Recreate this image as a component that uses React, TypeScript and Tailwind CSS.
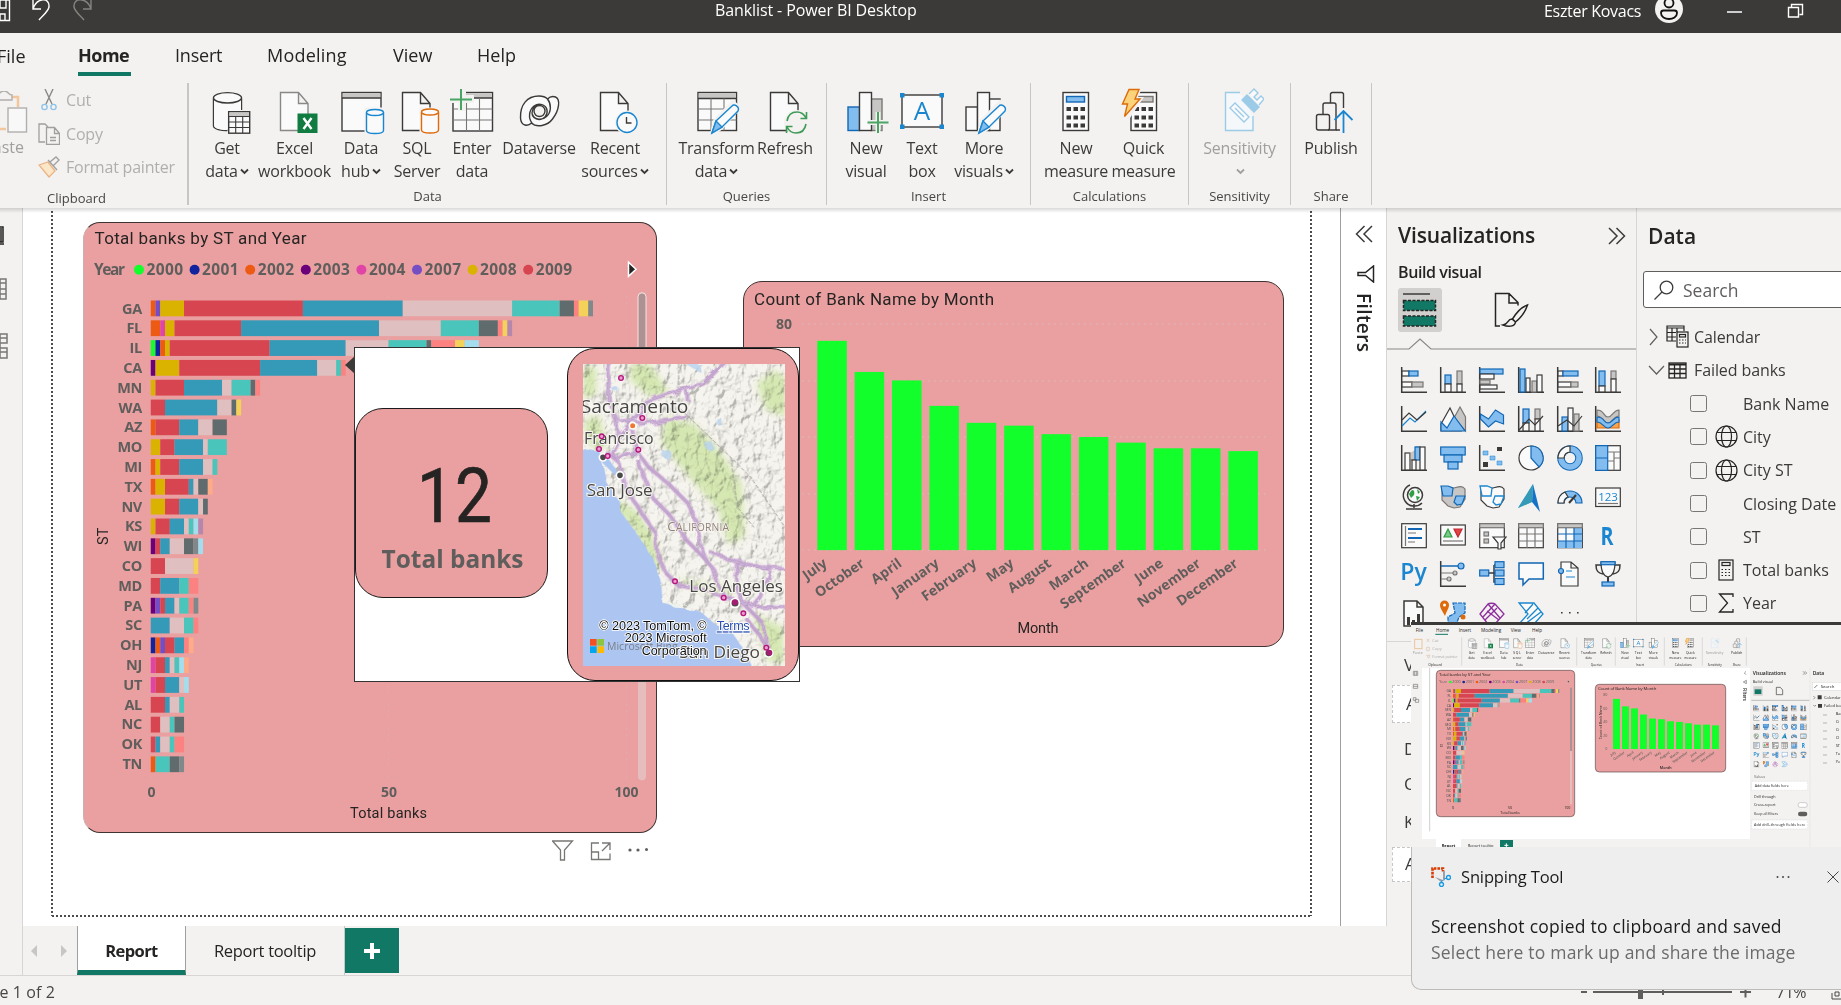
import React from "react";

const DARK = "#3b3a39";
const BLUE = "#1a86d0";
const LBLUE = "#83bdef";
const MBLUE = "#1267b4";
const GRAY = "#c8c6c4";
const MGRAY = "#797775";
const WHITE = "#fafafa";

/* ---------- ribbon icons (48 x 48) ---------- */

const Big = ({ children }: { children: React.ReactNode }) => (
  <svg width="48" height="48" viewBox="0 0 48 48" fill="none" stroke={DARK} strokeWidth="1.4" className="shrink-0">
    {children}
  </svg>
);

const Page = ({ color = DARK }: { color?: string }) => (
  <path d="M9.5 4.5h18l9.5 11v27h-27.5zM27.5 4.5v11h9.500" fill={WHITE} stroke={color} />
);

const Cyl = ({ x, y, w, h, color }: { x: number; y: number; w: number; h: number; color: string }) => (
  <g stroke={color} fill={WHITE}>
    <path d={`M${x} ${y + 3}v${h - 6}c0 4 ${w} 4 ${w} 0v-${h - 6}`} />
    <ellipse cx={x + w / 2} cy={y + 3} rx={w / 2} ry="3" />
  </g>
);

const Pencil = () => (
  <g>
    <path d="M22 33L40 14l6 6-18 20-9 6z" fill="#f3f2f1" stroke="#f3f2f1" strokeWidth="4" />
    <path d="M23 33L39 18c2-3 8 1 6 5L29 39l-10 6z" fill={WHITE} stroke={BLUE} />
    <path d="M23 33l6 6-10 6z" fill={LBLUE} stroke={BLUE} />
  </g>
);

const Calc = () => (
  <g>
    <rect x="11" y="4.500" width="25.500" height="38" fill={WHITE} />
    {[19, 27.5, 35.5].map((y) =>
      [14.5, 21.5, 28.5].map((x) => <rect key={`${x}-${y}`} x={x} y={y} width="4.500" height="4" fill={DARK} stroke="none" />)
    )}
  </g>
);

const IconGet = (
  <Big>
    <path d="M10.500 10v28c0 3 8 4.800 14 4.500M38.500 10v12" />
    <path d="M11 10h27v13h-14v19c-8 0-13-2-13-5z" fill={WHITE} stroke="none" />
    <ellipse cx="24.500" cy="9.800" rx="14" ry="5.200" fill={WHITE} />
    <rect x="25.700" y="23.700" width="21" height="21.500" fill={WHITE} />
    <rect x="26.400" y="24.400" width="19.600" height="3.600" fill={GRAY} stroke="none" />
    <path d="M25.700 28.500h21M25.700 34h21M25.700 39.500h21M32.700 28v17M39.700 28v17" strokeWidth="1.100" />
  </Big>
);
const IconExcel = (
  <Big>
    <Page color="#8a8886" />
    <rect x="26.500" y="25.500" width="20" height="19.500" fill="#107c41" stroke="none" />
    <path d="M32.500 30l8 11M40.500 30l-8 11" stroke="#fff" strokeWidth="2.400" />
  </Big>
);
const IconHub = (
  <Big>
    <rect x="5" y="4.500" width="39" height="38.500" fill={WHITE} />
    <rect x="5.700" y="5.200" width="37.600" height="4.600" fill={GRAY} stroke="none" />
    <path d="M5 10h39" />
    <rect x="27.500" y="19.500" width="21" height="28" fill="#f3f2f1" stroke="none" />
    <Cyl x={29.500} y={21.500} w={17} h={24} color={BLUE} />
  </Big>
);
const IconSql = (
  <Big>
    <Page />
    <rect x="26.500" y="19.500" width="21" height="28" fill="#f3f2f1" stroke="none" />
    <Cyl x={28.500} y={21} w={17} h={24} color="#dd6b0a" />
  </Big>
);
const IconEnter = (
  <Big>
    <rect x="5" y="4.500" width="39.500" height="38.500" fill={WHITE} />
    <rect x="5.700" y="5.200" width="38" height="4.600" fill={GRAY} stroke="none" />
    <path d="M5 10h39.500" />
    <path d="M5 21h39.500M5 32h39.500M18.500 10v33M31.500 10v33" stroke={MGRAY} strokeWidth="1.100" />
    <path d="M1 1h17v6h8v8h-8v8h-8v-8h-9z" fill="#f3f2f1" stroke="none" />
    <path d="M13 1v21M2 11.500h22" stroke="#4aa564" strokeWidth="2" />
  </Big>
);
const IconDataverse = (
  <Big>
    <path d="M24 8c-12 0-19 9-18.500 22 .5 9 8 8 11 5 5 5 16 3 21-4 7-9 8-20 3-22-3-1-6 0-8 2-2-2-5-3-8.500-3z" fill={WHITE} />
    <path d="M17 35c-4-5-3-13 2-17 5-3.500 12-1.500 13 4 1 5-3 9.500-8 9.500-4 0-7-3-7-6.500 0-5 4-8.500 8-8M32.500 11c4 5 4 13-1 17.500-4 4-12 4-14-2" />
    <circle cx="24.500" cy="23" r="5.500" fill="#f3f2f1" />
  </Big>
);
const IconRecent = (
  <Big>
    <Page />
    <circle cx="36" cy="34.500" r="12" fill="#f3f2f1" stroke="none" />
    <circle cx="36" cy="34.500" r="10" fill={WHITE} stroke={BLUE} />
    <path d="M35.500 29v6h5" />
  </Big>
);
const IconTransform = (
  <Big>
    <rect x="5" y="4.500" width="38.500" height="38" fill={WHITE} />
    <rect x="5.700" y="5.200" width="37" height="5" fill={GRAY} stroke="none" />
    <path d="M5 10.500h38.500" />
    <path d="M5 21h38.500M5 32h38.500M18 10.500v32M31 10.500v32" stroke={MGRAY} strokeWidth="1.100" />
    <Pencil />
  </Big>
);
const IconRefresh = (
  <Big>
    <Page />
    <circle cx="35.500" cy="34.500" r="12.500" fill="#f3f2f1" stroke="none" />
    <path d="M26 33c1-6 5-9 10-9 4 0 7 2 9 6M45 36c-1 6-5 9-10 9-4 0-7-2-9-6M45.500 24v6.500h-6M25.500 45v-6.500h6" stroke="#3f9a56" strokeWidth="1.600" />
  </Big>
);
const IconNewVisual = (
  <Big>
    <rect x="6" y="19" width="11.500" height="23.500" fill={LBLUE} stroke={MBLUE} />
    <rect x="29" y="11" width="11" height="31.500" fill={GRAY} stroke={MGRAY} />
    <rect x="17.500" y="4.500" width="12" height="38" fill={WHITE} />
    <path d="M36 24v21M25.500 34.500h21" stroke="#f3f2f1" strokeWidth="5" />
    <path d="M36 24v21M25.500 34.500h21" stroke="#4aa564" strokeWidth="2" />
  </Big>
);
const IconText = (
  <Big>
    <rect x="4" y="7" width="40" height="32" fill={WHITE} />
    <text x="24" y="32" textAnchor="middle" fontFamily="Open Sans" fontSize="26" fill={BLUE} stroke="none">A</text>
    {[[2, 5], [41.500, 5], [2, 36.500], [41.500, 36.500]].map(([x, y]) => (
      <rect key={`${x}${y}`} x={x} y={y} width="4.500" height="4.500" fill={BLUE} stroke="none" />
    ))}
  </Big>
);
const IconMore = (
  <Big>
    <rect x="29" y="11" width="11" height="31.500" fill={WHITE} />
    <rect x="6" y="19" width="11.500" height="23.500" fill={WHITE} />
    <rect x="17.500" y="4.500" width="12" height="38" fill={WHITE} />
    <Pencil />
  </Big>
);
const IconMeasure = (
  <Big>
    <Calc />
    <rect x="14.500" y="8.500" width="18" height="5.500" fill={LBLUE} stroke={MBLUE} />
  </Big>
);
const IconQuick = (
  <Big>
    <Calc />
    <rect x="16" y="8.500" width="17" height="5.500" fill={GRAY} stroke={MGRAY} />
    <path d="M7 0h15l-4 9h6l-16 24-7-4 2-10h-4z" fill="#f3f2f1" stroke="none" />
    <path d="M9 1.500h10l-4 9.500h5L4.500 28.500 7.500 16h-5z" fill="#fcd37a" stroke="#dd6b0a" />
  </Big>
);
const IconSensitivity = (
  <Big>
    <g stroke="#9ccbe8">
      <path d="M24 4.500H9.500v38H37V28" fill="#f4f8fa" />
      <path d="M26 12l5-5 12 12-5 5z" fill="#9ccbe8" />
      <path d="M33 6l5-5 4 4-4 4 3 3 4-4 3 3-5 6" fill={WHITE} />
      <path d="M14 20l5-5 14 14-5 5zM19 20l9 9" fill={WHITE} />
    </g>
  </Big>
);
const IconPublish = (
  <Big>
    <rect x="9.500" y="26.500" width="13" height="15.500" rx="2" />
    <path d="M16 26v-9a2 2 0 012-2h9a2 2 0 012 2v25h-8" />
    <path d="M23.500 15v-8a2 2 0 012-2.500h9a2 2 0 012 2.500v13M29 42h4" />
    <path d="M36.500 45V24M27.500 32l9-9 9 9" stroke={BLUE} strokeWidth="1.800" />
  </Big>
);

const Chev = ({ faded = false }: { faded?: boolean }) => (
  <svg width="9" height="7" viewBox="0 0 9 7" fill="none" stroke={faded ? "#a19f9d" : DARK} strokeWidth="1.800" className="inline-block ml-0.5 mb-px">
    <path d="M1 1.500l3.500 3.500L8 1.500" />
  </svg>
);

type Btn = { icon: React.ReactNode; lines: string[]; w: string; arrow?: boolean; faded?: boolean };
type Group = { name: string; w: string; items: Btn[] };

const groups: Group[] = [
  {
    name: "Data",
    w: "w-[478px]",
    items: [
      { icon: IconGet, lines: ["Get", "data"], w: "w-[76px]", arrow: true },
      { icon: IconExcel, lines: ["Excel", "workbook"], w: "w-[59px]" },
      { icon: IconHub, lines: ["Data", "hub"], w: "w-[74px]", arrow: true },
      { icon: IconSql, lines: ["SQL", "Server"], w: "w-[38px]" },
      { icon: IconEnter, lines: ["Enter", "data"], w: "w-[72px]" },
      { icon: IconDataverse, lines: ["Dataverse"], w: "w-[62px]" },
      { icon: IconRecent, lines: ["Recent", "sources"], w: "w-[90px]", arrow: true },
    ],
  },
  {
    name: "Queries",
    w: "w-[160px]",
    items: [
      { icon: IconTransform, lines: ["Transform", "data"], w: "w-[99px]", arrow: true },
      { icon: IconRefresh, lines: ["Refresh"], w: "w-[38px]" },
    ],
  },
  {
    name: "Insert",
    w: "w-[204px]",
    items: [
      { icon: IconNewVisual, lines: ["New", "visual"], w: "w-[78px]" },
      { icon: IconText, lines: ["Text", "box"], w: "w-[34px]" },
      { icon: IconMore, lines: ["More", "visuals"], w: "w-[90px]", arrow: true },
    ],
  },
  {
    name: "Calculations",
    w: "w-[158px]",
    items: [
      { icon: IconMeasure, lines: ["New", "measure"], w: "w-[90px]" },
      { icon: IconQuick, lines: ["Quick", "measure"], w: "w-[45px]" },
    ],
  },
  { name: "Sensitivity", w: "w-[102px]", items: [{ icon: IconSensitivity, lines: ["Sensitivity", ""], w: "w-[101px]", arrow: true, faded: true }] },
  { name: "Share", w: "w-[81px]", items: [{ icon: IconPublish, lines: ["Publish"], w: "w-[80px]" }] },
];

function Ribbon() {
  return (
    <div className="flex h-[126px] pt-[1px]">
      <div className="w-[189px] h-[122px] border-r-2 border-[#c8c6c4] relative shrink-0">
        <div className="flex h-full text-[16px] text-[#b1afad]">
          <div className="w-[31px] overflow-hidden flex flex-col items-end shrink-0">
            <svg width="31" height="46" viewBox="0 0 31 46" fill="none" stroke="#b1afad" strokeWidth="1.400" className="mt-2">
              <path d="M-10 38V6h10M10 6h8v10M0 38h6" stroke="#f2c79b" strokeWidth="2.500" />
              <path d="M-4 9V4c4 0 3-4 8-4s4 4 8 4v5z" fill="#f3f2f1" />
              <rect x="8" y="17" width="18.500" height="24" fill="#f8f8f8" />
            </svg>
            <span className="mt-[-2px] mr-[7px] text-[#a19f9d]">Paste</span>
          </div>
          <div className="flex flex-col gap-[9.500px] pl-[7px] pt-[5px] tracking-[-0.2px]">
            <div className="flex items-center gap-[6px] h-6">
              <svg width="22" height="22" viewBox="0 0 22 22" fill="none" strokeWidth="1.400">
                <path d="M7 0l7 15M15 0L8 15" stroke="#8a8886" />
                <circle cx="6.500" cy="18" r="2.600" stroke="#8ec3e6" />
                <circle cx="15.500" cy="18" r="2.600" stroke="#8ec3e6" />
              </svg>
              Cut
            </div>
            <div className="flex items-center gap-[6px] h-6">
              <svg width="22" height="22" viewBox="0 0 22 22" fill="none" stroke="#a19f9d" strokeWidth="1.300">
                <path d="M7 19H1V1h6l3 3" />
                <path d="M8.500 4.500h8l5 6v11h-13zM16.500 4.500v6h5M12 14.500h6M12 17.500h6" />
              </svg>
              Copy
            </div>
            <div className="flex items-center gap-[6px] h-6">
              <svg width="22" height="22" viewBox="0 0 22 22" fill="none" strokeWidth="1.300">
                <path d="M1 9l9-3 7 9-6 6z" fill="#fbe6c8" stroke="#eab384" />
                <path d="M10 4l9 10M12 6l6-5 3 3-6 6" stroke="#a19f9d" fill="#f3f2f1" />
              </svg>
              Format painter
            </div>
          </div>
        </div>
        <span className="absolute left-[47px] bottom-[-3px] text-[13px] text-[#484644]">Clipboard</span>
      </div>
      {groups.map((gr) => (
        <div key={gr.name} className={`${gr.w} h-[122px] flex flex-col shrink-0 border-r border-[#c8c6c4]`}>
          <div className="flex h-[107px] pt-[5px]">
            {gr.items.map((bt, i) => (
              <div key={i} className={`${bt.w} shrink-0 flex flex-col items-center`}>
                {bt.icon}
                <div className={`text-[16px] leading-[22.500px] text-center whitespace-nowrap mt-[1px] tracking-[-0.2px] ${bt.faded ? "text-[#a19f9d]" : "text-[#3b3a39]"}`}>
                  {bt.lines.map((l, j) => (
                    <div key={j}>
                      {l}
                      {bt.arrow && j === bt.lines.length - 1 && <Chev faded={bt.faded} />}
                    </div>
                  ))}
                </div>
              </div>
            ))}
          </div>
          <div className="text-center text-[13px] leading-[18px] text-[#484644]">{gr.name}</div>
        </div>
      ))}
    </div>
  );
}

/* ---------- stacked bar chart ---------- */

const seriesColor: Record<string, string> = {
  a: "#12ff2c", b: "#12239e", c: "#ec5a14", d: "#6b007b", e: "#e044a7", f: "#744ec2",
  g: "#d9b300", h: "#d64550", i: "#3599b8", j: "#dfbfbf", k: "#4ac5bb", l: "#5f6b6d",
  m: "#fb8281", n: "#f4d25a", o: "#7f898a", p: "#a4ddee", q: "#fdab89", r: "#b687ac",
};

const states: [string, string][] = [
  ["GA", "c1 f1 g5 h25 i21 j23 k10 l3 m1 n2 o1"],
  ["FL", "c2 e1 g2 h14 i29 j13 k8 l4 m1 n1 r1"],
  ["IL", "a1 b1 c1 g1 h21 i16 j9 k8 l1 m5 n2 p3"],
  ["CA", "d1 g5 h17 i12 j4 k1 m1"],
  ["MN", "g1 h6 i8 j2 k4 l1 m1"],
  ["WA", "h3 i11 j3 l1 n1"],
  ["AZ", "c1 h5 i4 j3 l3"],
  ["MO", "g2 h3 i6 j1 k4"],
  ["MI", "c1 g1 h4 i5 j2 k1"],
  ["TX", "c1 g2 h5 i1 j1 l2 q1"],
  ["NV", "g3 h3 i4 j1 l1"],
  ["KS", "g1 h3 i3 j1 k1 p1 r1"],
  ["WI", "d1 h1 i2 j3 l2 o1 p1"],
  ["CO", "h3 j6 n1"],
  ["MD", "h2 i4 k2 m2"],
  ["PA", "d1 f1 h1 i2 j1 k2 m1 o1"],
  ["SC", "i4 j3 k2 m1"],
  ["OH", "b1 c1 f1 h2 i2 m1 q1"],
  ["NJ", "e1 h2 i1 j1 k1 p1 q1"],
  ["UT", "e1 h2 i3 j1 p1"],
  ["AL", "h3 i1 j2 k1"],
  ["NC", "h2 j2 k1 l2"],
  ["OK", "h1 i1 j2 k1 m2"],
  ["TN", "c1 k3 l2 o1"],
];

function StackRects({ x0, y0, unit, pitch, h }: { x0: number; y0: number; unit: number; pitch: number; h: number }) {
  return (
    <>
      {states.map(([name, segs], r) => {
        let at = 0;
        return (
          <g key={name}>
            {segs.split(" ").map((s) => {
              const n = Number(s.slice(1));
              const x = x0 + at * unit;
              at += n;
              return <rect key={s} x={x} y={y0 + r * pitch} width={n * unit} height={h} fill={seriesColor[s[0]]} />;
            })}
          </g>
        );
      })}
    </>
  );
}

const legend: [string, string][] = [
  ["2000", "a"], ["2001", "b"], ["2002", "c"], ["2003", "d"], ["2004", "e"], ["2007", "f"], ["2008", "g"], ["2009", "h"],
];

const LABEL = "#605e5c";

function StateVisual() {
  return (
    <svg width="572" height="609" viewBox="84 223.700 572 609" className="block" fontFamily="Open Sans">
      <text x="94.500" y="245" fontFamily="Roboto" fontSize="17" fill="#252423" textLength="212">Total banks by ST and Year</text>
      <g fontWeight="700" fontSize="15.500" fill={LABEL}>
        <text x="94" y="276" textLength="31">Year</text>
        {legend.map(([y, c], i) => (
          <g key={y}>
            <circle cx={139 + i * 55.600} cy="270.500" r="5" fill={seriesColor[c]} />
            <text x={146.500 + i * 55.600} y="276" textLength="36.500">{y}</text>
          </g>
        ))}
      </g>
      <path d="M628.500 263v14l7.500-7z" fill="#252423" stroke="#fff" strokeWidth="1.500" />
      <g stroke="#d8b4b4" strokeDasharray="1 5">
        <path d="M151 297v484M388.500 297v484M626.500 297v484" />
      </g>
      <StackRects x0={150.750} y0={301.200} unit={4.755} pitch={19.820} h={15.800} />
      <g fontWeight="700" fontSize="14.500" fill={LABEL} textAnchor="end" letterSpacing="-0.300">
        {states.map(([s], i) => (
          <text key={s} x="142" y={314.300 + i * 19.800}>{s}</text>
        ))}
      </g>
      <g fontWeight="700" fontSize="14" fill={LABEL} textAnchor="middle">
        <text x="151.500" y="798">0</text>
        <text x="389" y="798">50</text>
        <text x="626.500" y="798">100</text>
      </g>
      <g fontFamily="Roboto" fontSize="14.500" fill="#252423" textAnchor="middle">
        <text x="388.500" y="819" textLength="77">Total banks</text>
        <text transform="translate(107.500 537) rotate(-90)">ST</text>
      </g>
      <rect x="638" y="293" width="8" height="488" rx="4" fill="#e5bdbd" />
      <rect x="638" y="293.500" width="8" height="300" rx="4" fill="#ae9293" stroke="#f6e3e3" strokeWidth="1" />
    </svg>
  );
}

const months: [string, number][] = [
  ["July", 74], ["October", 63], ["April", 60], ["January", 51], ["February", 45], ["May", 44],
  ["August", 41], ["March", 40], ["September", 38], ["June", 36], ["November", 36], ["December", 35],
];

function MonthVisual() {
  return (
    <svg width="539" height="363" viewBox="744 282.500 539 363" className="block" fontFamily="Open Sans">
      <text x="754" y="305" fontFamily="Roboto" fontSize="17" fill="#252423" textLength="240">Count of Bank Name by Month</text>
      <text x="776" y="329.500" fontWeight="700" fontSize="14" fill={LABEL}>80</text>
      <g stroke="#d9bcbc" strokeDasharray="1.500 4.500">
        <path d="M802 324.500h468M802 381.500h468M802 437.500h468M802 494.500h468M802 550.500h468" />
      </g>
      {months.map(([m, v], i) => (
        <g key={m}>
          <rect x={817.300 + i * 37.370} y={550.600 - v * 2.828} width="29.500" height={v * 2.828} fill="#12ff2c" />
          <text transform={`translate(${828 + i * 37.370} 566) rotate(-35)`} textAnchor="end" fontWeight="700" fontSize="14" fill={LABEL}>{m}</text>
        </g>
      ))}
      <text x="1038" y="633" textAnchor="middle" fontFamily="Roboto" fontSize="14.500" fill="#252423" textLength="41">Month</text>
    </svg>
  );
}

/* ---------- report-page tooltip ---------- */

const cities: [number, number][] = [
  [843, 143], [907, 263], [785, 318], [777, 356], [803, 377], [895, 358], [1005, 753], [1151, 802], [1210, 849], [1279, 952],
];

const roads = [
  "M806 95v110l22 60 8 60-20 40 18 30M835 320l40-45 50-65 90-30 75-20 65-65M835 265l75 15 130-22M1040 175l3 38",
  "M878 290l12 70-60 30-30-25M895 370l30 40 60 50 60 60 25 60 15 80 20 38",
  "M890 385l20 50 30 70 50 50 45 70 50 50 35 40 15 50 25 45",
  "M835 390l25 90 40 60 45 65 10 75 25 50 35 35 80 15 60 20 30 10",
  "M1110 665l80 30 70 15 75 5M1190 700v70l20 50 60 60 15 75M1185 815l80 15 70 0M1290 720l-30 80-25 30M1215 860l40 50 30 50",
];

function MapPicture() {
  return (
    <svg width="202" height="302" viewBox="729 101 606 906" preserveAspectRatio="none" fontFamily="Open Sans">
      <defs>
        <filter id="relief" x="0" y="0" width="1" height="1">
          <feTurbulence type="fractalNoise" baseFrequency="0.035 0.025" numOctaves="4" seed="8" result="n" />
          <feDiffuseLighting in="n" surfaceScale="30" lightingColor="#ffffff" diffuseConstant="1.250">
            <feDistantLight azimuth="225" elevation="55" />
          </feDiffuseLighting>
        </filter>
        <filter id="rough" x="-0.100" y="-0.100" width="1.200" height="1.200">
          <feTurbulence type="fractalNoise" baseFrequency="0.03" numOctaves="2" seed="3" result="n" />
          <feDisplacementMap in="SourceGraphic" in2="n" scale="22" />
        </filter>
        <filter id="soft" x="-0.500" y="-0.500" width="2" height="2">
          <feGaussianBlur stdDeviation="10" />
        </filter>
      </defs>
      <rect x="729" y="101" width="606" height="906" fill="#f6f4ee" />
      <g filter="url(#soft)" fill="#d6e8b2">
        <path d="M870 100l60 0 60 90-60 10-60-50zM975 260l90 20 80 90 60 90 10 160-50 20-30-100-80-90-90-110z" />
        <path d="M1250 160l50-40 40 20v120l-60-20zM729 110l40 0 0 80-40 20zM840 510l60 40 50 90 20 80-30-10-60-110-60-70zM1240 850l90 40v110l-50-10z" />
        <path d="M740 260l40 0 20 90-30 10-40-40zM1000 740l90 20 90 10v20l-100-10z" />
      </g>
      <rect x="729" y="101" width="606" height="906" filter="url(#relief)" opacity="0.250" className="mix-blend-multiply" />
      <g filter="url(#rough)">
        <path d="M700 350l79 15 10 40 10 50 40 60 10 40 40 50 30 50 25 35 15 60 5 20 5 50 50 10 70 20 40 35 40 10 20 30 30 50 40 75 15 60H700z" fill="#adc6f1" />
        <path d="M787 365l18 20 30 45-6 8-36-35z" fill="#adc6f1" />
        <path d="M975 818l40 4 20 12-30-2zM1030 822l40-4-20 10z" fill="#eef2ee" />
        <g fill="#b8d2ef" opacity="0.800">
          <circle cx="978" cy="370" r="14" /><circle cx="1106" cy="345" r="12" /><circle cx="1140" cy="275" r="10" /><path d="M1040 101l40 25 5-25z" /><circle cx="825" cy="175" r="8" />
        </g>
      </g>
      <path d="M1016 101v130l156 150 60 60 103 150M1172 381l20 150 50 60" fill="none" stroke="#a3a39c" strokeWidth="3" strokeDasharray="12 5" />
      <g filter="url(#rough)" fill="none" strokeLinejoin="round">
        {roads.map((d) => (
          <g key={d}>
            <path d={d} stroke="#d3b0df" strokeWidth="14" opacity="0.800" />
            <path d={d} stroke="#a888b6" strokeWidth="6.500" />
            <path d={d} stroke="#d9c3e2" strokeWidth="3" />
          </g>
        ))}
      </g>
      <g fill="#4a4a4a" stroke="#fff" strokeWidth="5">
        <circle cx="789" cy="381" r="11" /><circle cx="840" cy="435" r="11" /><circle cx="1185" cy="818" r="13" /><circle cx="1286" cy="968" r="12" />
      </g>
      <circle cx="878" cy="286" r="10" fill="#f07830" stroke="#fff" strokeWidth="5" />
      <g fill="#484644" stroke="#f7f6f2" strokeWidth="6" paintOrder="stroke" fontSize="55">
        <text x="722" y="247" textLength="323" lengthAdjust="spacingAndGlyphs">Sacramento</text>
        <text x="732" y="342" fontSize="47" textLength="209" lengthAdjust="spacingAndGlyphs">Francisco</text>
        <text x="740" y="497" fontSize="47" textLength="198" lengthAdjust="spacingAndGlyphs">San Jose</text>
        <text x="1048" y="786" fontSize="49" textLength="281" lengthAdjust="spacingAndGlyphs">Los Angeles</text>
        <text x="1018" y="984" fontSize="49" textLength="242" lengthAdjust="spacingAndGlyphs">San Diego</text>
        <text x="982" y="601" fontSize="40" fill="#93827a" strokeWidth="3" letterSpacing="0.500">C<tspan fontSize="31">ALIFORNIA</tspan></text>
      </g>
      {cities.map(([x, y]) => (
        <circle key={x} cx={x} cy={y} r="7" fill="#e8a0cc" stroke="#b5157d" strokeWidth="4" />
      ))}
      <circle cx="1185" cy="816" r="9" fill="#a51d72" /><circle cx="1288" cy="967" r="9" fill="#a51d72" />
      <rect x="750" y="926" width="20" height="20" fill="#f25022" /><rect x="772" y="926" width="20" height="20" fill="#8cc63f" />
      <rect x="750" y="948" width="20" height="20" fill="#00a4ef" /><rect x="772" y="948" width="20" height="20" fill="#ffb900" />
      <text x="801" y="959" fontSize="33" fill="#7a7f88" textLength="212" lengthAdjust="spacingAndGlyphs">Microsoft Bing</text>
      <g fontFamily="Liberation Sans" fontSize="38" textAnchor="end" fill="#111" stroke="#fff" strokeWidth="5" paintOrder="stroke">
        <text x="1100" y="898" textLength="322">© 2023 TomTom, ©</text>
        <text x="1100" y="936" textLength="246">2023 Microsoft</text>
        <text x="1100" y="973" textLength="195">Corporation</text>
        <text x="1229" y="900" fill="#2a4fb0" textLength="99" textDecoration="underline">Terms</text>
      </g>
    </svg>
  );
}

function HoverTooltip() {
  return (
    <div className="absolute left-[331px] top-[139px] w-[446px] h-[335px] bg-white border border-[#333]">
      <svg width="10" height="20" viewBox="0 0 10 20" className="absolute left-[-10px] top-[7px]">
        <path d="M10 1v18L0 10z" fill="#3b3a38" />
      </svg>
      <div className="absolute left-0 top-[60px] w-[193px] h-[190px] rounded-[28px] border border-[#1b1b1b] bg-[#eaa0a0]">
        <svg width="191" height="188" viewBox="356 409 191 188">
          <g transform="translate(417 521.500) scale(0.870 1)" fontFamily="Roboto" fontSize="75.500" fill="#252423" stroke="#252423" strokeWidth="0.700">
            <text textLength="86" lengthAdjust="spacing">12</text>
          </g>
          <text x="381.500" y="567.500" fontFamily="Open Sans" fontWeight="700" fontSize="25.500" fill={LABEL} textLength="142" lengthAdjust="spacingAndGlyphs">Total banks</text>
        </svg>
      </div>
      <div className="absolute left-[212px] top-0 w-[232px] h-[333px] rounded-[28px] border border-[#111] bg-[#eaa0a0] pl-[15px] pt-[15px]">
        <MapPicture />
      </div>
    </div>
  );
}

/* ---------- visualization gallery (26 x 26) ---------- */

const Axis = () => <path d="M.7 0v25.300H26" stroke={DARK} fill="none" strokeWidth="1.500" />;
const b = { fill: LBLUE, stroke: MBLUE };
const g = { fill: GRAY, stroke: MGRAY };
const w = { fill: WHITE, stroke: DARK };
const R = ([x, y, ww, h]: number[], s: { fill: string; stroke: string }) => <rect x={x} y={y} width={ww} height={h} {...s} />;

const vizIcons: React.ReactNode[] = [
  <><Axis />{R([1, 4, 7, 5], w)}{R([8, 4, 9, 5], b)}{R([1, 15, 10, 5], w)}{R([11, 15, 11, 5], g)}</>,
  <><Axis />{R([5, 8, 6, 9], b)}{R([5, 17, 6, 8], w)}{R([17, 4, 5, 13], g)}{R([17, 17, 5, 8], w)}</>,
  <><Axis />{R([1, 2, 23, 5], b)}{R([1, 7, 14, 5], w)}{R([1, 13, 10, 4], g)}{R([1, 18, 17, 4], w)}</>,
  <><Axis />{R([2, 2, 5, 23], b)}{R([8, 11, 4, 14], w)}{R([14, 14, 5, 11], g)}{R([19, 8, 5, 17], w)}</>,
  <><Axis />{R([1, 4, 5, 5], w)}{R([6, 4, 15, 5], b)}{R([1, 15, 13, 5], w)}{R([14, 15, 7, 5], g)}</>,
  <><Axis />{R([4, 4, 6, 15], b)}{R([4, 19, 6, 6], w)}{R([16, 4, 5, 8], g)}{R([16, 12, 5, 13], w)}</>,

  <><Axis /><path d="M1 20l8-8 5 4L25 5" stroke={BLUE} fill="none" /><path d="M1 14l7-7 8 7 9-8" fill="none" stroke={DARK} /></>,
  <><path d="M14 12l6-11 5.500 10v14z" {...g} /><path d="M1 18L10 2l11 23H1z" {...w} /><path d="M1 16l6 6 7-12 11 15H1z" {...b} /></>,
  <><Axis /><path d="M1.500 8l8 5 7-9 8 5v9l-8-3-7 6-8-8z" {...b} /></>,
  <><Axis />{R([5, 3, 6, 14], b)}{R([5, 17, 6, 8], w)}{R([17, 3, 5, 10], g)}{R([17, 13, 5, 12], w)}<path d="M1 24L11 13l6 6 8-9" fill="none" stroke={DARK} /></>,
  <><Axis />{R([5, 11, 6, 14], b)}{R([11, 2, 5, 23], w)}{R([17, 8, 5, 17], g)}<path d="M1 20l9-6 7 6 8-10" fill="none" stroke={DARK} /></>,
  <><Axis /><path d="M2 14h22v8H2z" fill="#f7a44c" stroke="#dd6b0a" /><path d="M2 4c8 0 6 7 11 7s5-7 11-7v6c-6 0-6 7-11 7S8 10 2 10z" {...g} /><path d="M2 11c8 0 6 6 11 6s5-6 11-6v5c-6 0-6 6-11 6S8 16 2 16z" {...b} /></>,

  <><Axis />{R([4, 8, 5, 17], w)}<path d="M9 8v7h6V2h4" {...g} />{R([14, 2, 5, 13], b)}{R([19, 2, 5, 23], w)}{R([11, 15, 4, 10], w)}</>,
  <>{R([.7, 2, 24.500, 8], b)}{R([4, 10, 18, 7], b)}{R([8, 17, 10, 7], b)}</>,
  <><Axis /><g fill={DARK}><path d="M18 2h5v4h-5zM4 17h5v5H4z" /></g><g fill={LBLUE} stroke={BLUE} strokeWidth=".5"><path d="M4 6h5v4H4zM11 11h5v4h-5zM18 16h5v4h-5z" /></g></>,
  <><circle cx="13" cy="13" r="12" {...w} /><path d="M13 1a12 12 0 018 21L13 13z" {...b} /></>,
  <><circle cx="13" cy="13" r="9" fill="none" stroke={MBLUE} strokeWidth="7.500" /><circle cx="13" cy="13" r="9" fill="none" stroke={LBLUE} strokeWidth="5.500" /><path d="M13 1A12 12 0 001 13h6a6 6 0 016-6z" {...w} /></>,
  <>{R([.7, .7, 24.600, 24.600], w)}<path d="M.7.700h12v24.600H.7zM.7 13h12" {...b} /><path d="M13 7h12M13 16h6M19 7v18M19 13h6" stroke={MGRAY} fill="none" /></>,

  <><circle cx="14" cy="11" r="7.500" fill="#fafafa" stroke={DARK} strokeWidth="1.500" /><path d="M10 7c3-3 4 2 3 4l-3 3-2-4zM16 5l3 3-2 2zM15 12l4 1-3 4z" fill="#2f9e44" /><path d="M9 1a11 11 0 1012 18M13 20v4M5 25h16" fill="none" stroke={DARK} strokeWidth="1.500" /></>,
  <><path d="M2 4c6-3 8 2 12 0 4-1 8-3 11 1v10l-5 8-6 1-6-2-6-6z" {...g} /><path d="M1 2h7l5 2-1 8H3zM25 12l-3 8-5 1-3-3 2-6z" {...b} /></>,
  <><path d="M2 4c6-3 8 2 12 0 4-1 8-3 11 1v10l-5 8-6 1-6-2-6-6z" fill={WHITE} stroke={DARK} /><path d="M1 2h7l5 2-1 8H3zM25 12l-3 8-5 1-3-3 2-6z" fill={WHITE} stroke={BLUE} strokeWidth="1.300" /></>,
  <><path d="M15 0L0 24l14-6z" fill="#50b0cf" /><path d="M15 0l7 28-8-10z" fill="#1572c4" /><path d="M15 0l-1 18L0 24z" fill="#3599b8" /></>,
  <><path d="M1 19a12 12 0 0124 0h-6a6 6 0 00-12 0z" {...b} /><path d="M1 19A12 12 0 018 8l3 5a6 6 0 00-4 6z" {...w} /><path d="M12 19l7-8" stroke={DARK} strokeWidth="2" /></>,
  <>{R([.7, 4, 24.600, 18.500], w)}<text x="13" y="17" fontSize="11.500" textAnchor="middle" fill={BLUE} fontFamily="Open Sans">123</text><path d="M3 19.500h20" stroke={MGRAY} /></>,

  <>{R([.7, .7, 24.600, 24], w)}<path d="M7 6h14M7 15h14" stroke={MBLUE} strokeWidth="2" /><path d="M4.500 3v20M7 10h8M7 19h7" stroke={MGRAY} /></>,
  <>{R([.7, 2, 24.600, 20], w)}<path d="M8 6l4 8H4z" fill="#79c98a" stroke="#2f9e44" /><path d="M18 14l-4-8h8z" fill="#e04444" stroke="#c4262e" /><path d="M3 18h20" stroke={MGRAY} /></>,
  <>{R([.7, .7, 24.600, 24], w)}{R([.7, .7, 24.600, 4], g)}{R([5, 9, 4.500, 4], g)}{R([5, 16, 4.500, 4], g)}<path d="M14 14h13l-5 6v6h-3v-6z" {...w} /></>,
  <>{R([.7, .7, 24.600, 24], w)}{R([.7, .7, 24.600, 4], g)}<path d="M.7 11h24.600M.7 18h24.600M9 5v20M17 5v20" stroke={MGRAY} /></>,
  <>{R([.7, .7, 24.600, 24], w)}<path d="M17 5h8v20H1v-7h16z" fill={LBLUE} />{R([.7, .7, 24.600, 4], g)}<path d="M.7 11h24.600M.7 18h24.600M9 5v20M17 5v20" stroke={MBLUE} /></>,
  <text x="12" y="22" fontSize="25" textAnchor="middle" fontWeight="700" fill={BLUE} fontFamily="Open Sans" textLength="13" lengthAdjust="spacingAndGlyphs">R</text>,

  <text x="12.500" y="19" fontSize="23" textAnchor="middle" fontWeight="600" fill={BLUE} fontFamily="Open Sans">Py</text>,
  <><Axis /><path d="M1 5h17" stroke={MBLUE} strokeWidth="1.500" /><path d="M1 12h12M1 18h6" stroke={MGRAY} /><circle cx="21" cy="5" r="3" {...b} /><circle cx="15" cy="12" r="2" {...g} /><circle cx="9" cy="18" r="2" {...g} /></>,
  <><path d="M9 12h6M15 4v17h3M15 12h3M15 4h3" stroke={DARK} fill="none" strokeWidth="1.500" />{R([.7, 9, 9, 6], b)}{R([16, .7, 9, 6], b)}{R([16, 9, 9, 6], b)}{R([16, 17.500, 9, 6], b)}</>,
  <path d="M1 2h24.300v16H11l-6 6v-6H1z" fill={WHITE} stroke={MBLUE} strokeWidth="1.500" />,
  <><path d="M4 1h10l7 6v18H4zM14 1v6h7" {...w} /><circle cx="4" cy="10" r="2.500" {...b} /><path d="M9 10h6M9 16h9" stroke={BLUE} /></>,
  <><path d="M7 4H1c0 6 2 8 7 9M19 4h6c0 6-2 8-7 9" fill="none" stroke={DARK} strokeWidth="1.500" /><path d="M6 1h14c0 9-2 14-7 15-5-1-7-6-7-15z" {...w} />{R([6, .7, 14, 3], b)}<path d="M13 16v6" stroke={DARK} strokeWidth="2" />{R([7, 21, 12, 4], b)}</>,

  <><path d="M3 1h13l6 6v19H3zM16 1v6h6" {...w} strokeWidth="1.500" /><path d="M6 17h3v8H6zM11 20h3v5h-3zM16 14h3v11h-3z" fill={DARK} /></>,
  <><path d="M13 3h12v10l-6 4-3 8H8v-8l7-4z" fill={LBLUE} stroke={MBLUE} strokeDasharray="4 1" /><path d="M5 16c-3-6-5-8-5-11a4.500 4.500 0 019 0c0 3-2 5-4 11z" fill="#dd6b0a" /><circle cx="4.500" cy="5" r="1.500" fill="#fff" /><circle cx="23" cy="17" r="2.500" fill="#dd6b0a" /></>,
  <g fill="none" stroke="#8e2d9c" strokeWidth="1.300"><path d="M1 14L9 4c1-1 6-1 7 0l9 10-9 10c-1 1-6 1-7 0z" /><path d="M9 4l12 14M16 4L4 17M8 11l12 9M18 8L6 20" /></g>,
  <g fill={WHITE} stroke={BLUE} strokeWidth="1.300"><path d="M1 3h15l9 11-9 10H1l9-10zM7 13l8-9M9 19L20 8M7 24L23 12" /></g>,
  <g fill={DARK}><path d="M4 12h1.600v1.600H4zM12 12h1.600v1.600H12zM20 12h1.600v1.600H20z" /></g>,
];

const Chevrons = ({ flip = false }: { flip?: boolean }) => (
  <svg width="18" height="18" viewBox="0 0 18 18" fill="none" stroke={DARK} strokeWidth="1.500" className={flip ? "rotate-180" : ""}>
    <path d="M1 1l8 8-8 8M8.500 1l8 8-8 8" />
  </svg>
);

function VizPane() {
  return (
    <div className="w-[250px] shrink-0 border-r border-[#d8d6d4] bg-[#f3f2f1] h-[767px] overflow-hidden flex flex-col">
      <div className="flex items-center justify-between pl-[11px] pr-[10px] mt-[14px] h-7">
        <h2 className="text-[21px] font-semibold text-[#252423] tracking-[-0.15px]">Visualizations</h2>
        <Chevrons />
      </div>
      <div className="pl-[11px] mt-[10px] text-[16px] leading-6 font-semibold text-[#252423] tracking-[-0.4px]">Build visual</div>
      <div className="flex pl-[11px] mt-[4px] gap-[52px]">
        <div className="w-11 h-11 rounded-[3px] bg-[#d2d0ce]">
          <svg width="44" height="44" viewBox="0 0 44 44" fill="none" stroke={DARK} strokeWidth="1.500">
            <path d="M5 6h27" />
            <path d="M5.500 12.500h32v10h-32zM5.500 28h32v10h-32z" fill="#117865" stroke="#252423" strokeDasharray="3 1.500" />
          </svg>
        </div>
        <svg width="36" height="36" viewBox="0 0 36 36" fill="none" stroke="#252423" strokeWidth="1.500" className="mt-1">
          <path d="M6 34H1.500V1.500H15l9 9v3M15 1.500v9.500h9M33.500 13c-6 2-12 9-15 14l3 3c5-4 10-11 12-17zM18 27c-5 0-3 5-9 6 5 2 12 2 12.500-3z" />
        </svg>
      </div>
      <svg width="249" height="13" viewBox="0 0 249 13" fill="none" stroke="#8a8886" strokeWidth="1.200" className="mt-[6px] shrink-0">
        <path d="M0 11h22L33 1l11 10h205" />
      </svg>
      <div className="grid grid-cols-[repeat(6,38.900px)] auto-rows-[38.900px] mt-[16px] pl-[14px] shrink-0">
        {vizIcons.map((ic, i) => (
          <svg key={i} width="26" height="26" viewBox="0 0 26 26" fill="none" strokeWidth="1.200" className="overflow-visible">
            {ic}
          </svg>
        ))}
      </div>
      <div className="border-t border-[#d8d6d4] mt-[2px] text-[17px] text-[#3b3a39] pl-[5px] shrink-0 whitespace-nowrap">
        <div className="pl-[12px] mt-[10px]">Values</div>
        <div className="h-[38px] mt-[7px] w-[232px] bg-white border border-dashed border-[#c8c6c4] pl-[13px] leading-9 overflow-hidden">Add data fields here</div>
        <div className="pl-[12px] mt-[13px]">Drill through</div>
        <div className="pl-[12px] mt-[10px]">Cross-report</div>
        <div className="pl-[12px] mt-[12px]">Keep all filters</div>
        <div className="h-[35px] mt-[13px] w-[232px] bg-white border border-dashed border-[#c8c6c4] pl-[12px] leading-8 overflow-hidden">Add drill-through fields here</div>
      </div>
    </div>
  );
}

const Globe = () => (
  <svg width="23" height="23" viewBox="0 0 23 23" fill="none" stroke="#252423" strokeWidth="1.200">
    <circle cx="11.500" cy="11.500" r="10.500" />
    <ellipse cx="11.500" cy="11.500" rx="5" ry="10.500" />
    <path d="M2 7.500h19M2 15.500h19" />
  </svg>
);
const CalcSmall = () => (
  <svg width="16" height="22" viewBox="0 0 16 22" fill="none" stroke="#252423" strokeWidth="1.200">
    <rect x="1" y="1" width="14" height="20" /><rect x="4" y="3.500" width="8" height="3" />
    <path d="M3.500 10.500h9M3.500 13.500h9M3.500 16.500h9" strokeDasharray="1.500 2" />
  </svg>
);
const Sigma = () => (
  <svg width="16" height="20" viewBox="0 0 16 20" fill="none" stroke="#252423" strokeWidth="1.300">
    <path d="M15 4V1H1.500l8 9-8 9H15v-3" />
  </svg>
);
const TableSmall = () => (
  <svg width="19" height="17" viewBox="0 0 19 17" fill="none" stroke="#252423" strokeWidth="1.300">
    <rect x="1" y="1" width="17" height="15" /><path d="M1 2.500h17" strokeWidth="2" /><path d="M1 7h17M1 11.500h17M6.500 3v13M12 3v13" />
  </svg>
);

const fields: [string, React.ReactNode][] = [
  ["Bank Name", null], ["City", <Globe />], ["City ST", <Globe />], ["Closing Date", null], ["ST", null], ["Total banks", <CalcSmall />], ["Year", <Sigma />],
];

function DataPane() {
  return (
    <div className="flex-1 min-w-0 overflow-hidden bg-[#f3f2f1] h-[767px]">
      <h2 className="text-[21px] font-semibold text-[#252423] mt-[14px] pl-[11px] leading-7">Data</h2>
      <div className="ml-[6px] mt-[21px] w-[230px] h-[37px] rounded-[3px] border border-[#605e5c] bg-white flex items-center pl-[10px] gap-[9px] text-[17.500px] text-[#605e5c]">
        <svg width="20" height="20" viewBox="0 0 20 20" fill="none" stroke="#3b3a39" strokeWidth="1.300">
          <circle cx="12.500" cy="7.500" r="6.300" /><path d="M8 12l-7.500 7.500" />
        </svg>
        <span className="mt-px">Search</span>
      </div>
      <div className="flex items-center h-[33px] mt-[12px] pl-[12px] text-[16px] text-[#3b3a39]">
        <svg width="9" height="18" viewBox="0 0 9 18" fill="none" stroke="#605e5c" strokeWidth="1.200"><path d="M1 1l7 8-7 8" /></svg>
        <svg width="23" height="23" viewBox="0 0 23 23" fill="none" stroke="#252423" strokeWidth="1.200" className="ml-[8px]">
          <path d="M10 16H1V1h17v5M1 3h17M1 7.500h9M1 12h9M6 3v13M11 3v4" />
          <rect x="11" y="7" width="11" height="15" /><rect x="13.500" y="9.500" width="6" height="2.500" /><path d="M13 15h7M13 18h7" strokeDasharray="1.500 1.500" />
        </svg>
        <span className="ml-[5px] tracking-[-0.1px]">Calendar</span>
      </div>
      <div className="flex items-center h-[34px] pl-[11px] text-[16px] text-[#3b3a39]">
        <svg width="17" height="10" viewBox="0 0 17 10" fill="none" stroke="#605e5c" strokeWidth="1.200"><path d="M1 1l7.500 8L16 1" /></svg>
        <span className="ml-[3px]"><TableSmall /></span>
        <span className="ml-[7px] tracking-[-0.1px]">Failed banks</span>
      </div>
      {fields.map(([name, icon]) => (
        <div key={name} className="flex items-center h-[33.300px] pl-[53px] text-[16px] text-[#3b3a39] whitespace-nowrap">
          <span className="w-[17px] h-[17px] shrink-0 rounded-[2.500px] border border-[#797775]" />
          <span className="w-[24px] ml-[7px] flex justify-center shrink-0">{icon}</span>
          <span className="ml-[5px]">{name}</span>
        </div>
      ))}
    </div>
  );
}

/* ---------- toast with the captured picture ---------- */

const miniButtons: [number, string, number, string?][] = [
  [113, "Paste", 30], [275, "Get", 18, "data"], [323, "Excel", 26, "workbook"], [371, "Data", 24, "hub"], [411, "SQL", 22, "server"], [450, "Enter", 26, "data"], [499, "Dataverse", 48],
  [553, "Recent", 32, "sources"], [626, "Transform", 46, "data"], [678, "Refresh", 34], [735, "New", 22, "visual"], [775, "Text", 22, "box"], [820, "More", 26, "visuals"],
  [886, "New", 22, "measure"], [931, "Quick", 26, "measure"], [1004, "Sensitivity", 52], [1070, "Publish", 34],
];
const miniIcons = [null, IconGet, IconExcel, IconHub, IconSql, IconEnter, IconDataverse, IconRecent, IconTransform, IconRefresh, IconNewVisual, IconText, IconMore, IconMeasure, IconQuick, IconSensitivity, IconPublish];

function Thumbnail() {
  return (
    <svg width="430" height="225" viewBox="93 36 1290 675" className="block" fontFamily="Open Sans" fontSize="15" fill="#252423">
      <rect x="93" y="36" width="1290" height="675" fill="#f3f2f1" />
      <rect x="93" y="36" width="1290" height="9" fill={DARK} />
      {([[107, "File"], [168, "Home"], [236, "Insert"], [303, "Modeling"], [392, "View"], [456, "Help"]] as [number, string][]).map(([x, t]) => (
        <text key={t} x={x} y="66" fontSize="14">{t}</text>
      ))}
      <path d="M166 73h38" stroke="#117865" strokeWidth="3" />
      {miniButtons.map(([x, p, len, q], i) => (
        <g key={x} opacity={i === 0 || i === 15 ? 0.500 : 1}>
          {miniIcons[i] && <svg x={x - 17} y="83" width="34" height="34" viewBox="0 0 48 48">{miniIcons[i]}</svg>}
          <text x={x} y="131" textAnchor="middle" fontSize="10" textLength={len}>{p}</text>
          {q && <text x={x} y="146" textAnchor="middle" fontSize="9">{q}</text>}
        </g>
      ))}
      <rect x="104" y="88" width="22" height="28" fill="none" stroke="#e9c49e" strokeWidth="3" />
      <g fill="#b1afad" fontSize="12"><text x="157" y="97">Cut</text><text x="157" y="121">Copy</text><text x="157" y="145" textLength="76">Format painter</text></g>
      <g fill="none" stroke="#d9c3ae" strokeWidth="2"><path d="M140 86l8 10M148 86l-8 10M140 112h8v10h-8zM140 136h10l-4 9z" /></g>
      <g fontSize="9" textAnchor="middle">
        <text x="165" y="167">Clipboard</text><text x="418" y="167">Data</text><text x="649" y="167">Queries</text><text x="780" y="167">Insert</text>
        <text x="910" y="167">Calculations</text><text x="1004" y="167">Sensitivity</text><text x="1070" y="167">Share</text>
      </g>
      <path d="M245 82v85M590 82v85M706 82v85M853 82v85M967 82v85M1099 82v85" stroke="#d0cecc" strokeWidth="2" />
      <rect x="126" y="174" width="984" height="513" fill="#fff" />
      <path d="M149 174v490" stroke="#b9b7b5" strokeWidth="2" />
      <g fill="none" stroke={MGRAY} strokeWidth="2"><path d="M100 184h13v12h-13zM104 184v12M109 184v12M100 223h13v12h-13zM100 229h13M100 263h8v8h-8zM106 268h10v9h-10z" /></g>
      <rect x="169" y="181" width="415" height="439" rx="12" fill="#eaa0a0" stroke="#5a4a4a" strokeWidth="2" />
      <text x="177" y="197" fontSize="13" textLength="155">Total banks by ST and Year</text>
      {legend.map(([y, c], i) => (
        <g key={y}><circle cx={211 + i * 40} cy="216" r="4" fill={seriesColor[c]} /><text x={217 + i * 40} y="220" fontSize="11" fill={LABEL}>{y}</text></g>
      ))}
      <text x="178" y="220" fontSize="11" fill={LABEL}>Year</text>
      <StackRects x0={219} y0={237} unit={3.430} pitch={14.250} h={12} />
      {states.map(([s], i) => <text key={s} x="213" y={247 + i * 14.250} fontSize="10" fontWeight="600" textAnchor="end" fill={LABEL}>{s}</text>)}
      <text transform="translate(188 412) rotate(-90)" fontSize="9">ST</text>
      <rect x="570" y="233" width="6" height="350" fill="#e5bdbd" /><rect x="570" y="233" width="6" height="190" fill="#ae9293" />
      <g fontSize="11" textAnchor="middle"><text x="219" y="596">0</text><text x="390" y="596">50</text><text x="562" y="596">100</text><text x="390" y="612">Total banks</text></g>
      <path d="M563 211l6 4-6 4z" stroke="#fff" />
      <rect x="646" y="223" width="391" height="263" rx="12" fill="#eaa0a0" stroke="#5a4a4a" strokeWidth="2" />
      <text x="654" y="241" fontSize="13" textLength="175">Count of Bank Name by Month</text>
      <g fontSize="11" fill={LABEL} textAnchor="end"><text x="682" y="258">80</text><text x="682" y="300">60</text><text x="682" y="340">40</text><text x="682" y="381">20</text><text x="682" y="421">0</text></g>
      <text transform="translate(665 388) rotate(-90)" fontSize="10" textLength="102">Count of Bank Name</text>
      {months.map(([m, v], i) => (
        <g key={m}>
          <rect x={699 + i * 27} y={417 - v * 2.030} width="21" height={v * 2.030} fill="#12ff2c" />
          <text transform={`translate(${708 + i * 27} 429) rotate(-35)`} fontSize="10" fontWeight="600" textAnchor="end" fill={LABEL}>{m}</text>
        </g>
      ))}
      <text x="857" y="477" fontSize="11" fontWeight="600" textAnchor="middle">Month</text>
      <path d="M1290 174v537" stroke="#d8d6d4" strokeWidth="1" />
      <text x="1118" y="195" fontSize="15" fontWeight="600" textLength="100">Visualizations</text>
      <text x="1118" y="220" fontSize="11" textLength="61">Build visual</text>
      <text x="1298" y="195" fontSize="15" fontWeight="600">Data</text>
      <path d="M1269 184l5 5-5 5M1275 184l5 5-5 5M1098 184l-5 5 5 5M1099 211l-9 5 9 5z" fill="none" stroke={DARK} strokeWidth="1.500" />
      <text transform="translate(1089 234) rotate(90)" fontSize="13" fontWeight="600">Filters</text>
      <rect x="1120" y="229" width="28" height="28" fill="#d2d0ce" /><rect x="1124" y="238" width="20" height="14" fill="#117865" />
      <path d="M1189 232h12l7 8v14h-19z" fill="none" stroke={DARK} strokeWidth="2" />
      <path d="M1114 271h174" stroke="#a19f9d" strokeWidth="2" />
      {vizIcons.slice(0, 40).map((ic, i) => (
        <svg key={i} x={1120 + (i % 6) * 28.200} y={285 + Math.floor(i / 6) * 28} width="19" height="19" viewBox="0 0 26 26" fill="none" strokeWidth="1.800">{ic}</svg>
      ))}
      <rect x="1297" y="217" width="90" height="24" fill="#fff" stroke="#c8c6c4" /><text x="1322" y="234" fontSize="13">Search</text>
      <path d="M1303 234l9-9" stroke={DARK} strokeWidth="2" />
      <g fontSize="12"><text x="1332" y="267">Calendar</text><text x="1332" y="291">Failed banks</text><text x="1367" y="315">Ban</text><text x="1367" y="339">Ci</text><text x="1367" y="363">Ci</text><text x="1367" y="387">Cl</text><text x="1367" y="411">ST</text><text x="1367" y="435">To</text><text x="1367" y="459">Ye</text></g>
      <path d="M1300 258l5 5-5 5M1300 285l4 4 4-4" fill="none" stroke={DARK} strokeWidth="1.500" />
      <path d="M1313 256h12v12h-12zM1314 282h12v11h-12z" fill={DARK} />
      {[312, 336, 360, 384, 408, 432, 456].map((y) => <path key={y} d={`M1329 ${y + 3}h12`} stroke={MGRAY} strokeWidth="1.500" />)}
      <g fontSize="11"><text x="1122" y="503" fill={LABEL}>Values</text><text x="1122" y="563">Drill through</text><text x="1122" y="588">Cross-report</text><text x="1122" y="616">Keep all filters</text></g>
      <g fill="#fff" stroke="#c8c6c4" strokeDasharray="6 3"><rect x="1115" y="514" width="168" height="27" /><rect x="1115" y="630" width="168" height="27" /></g>
      <g fontSize="11"><text x="1124" y="531">Add data fields here</text><text x="1122" y="648" textLength="154">Add drill-through fields here</text></g>
      <rect x="1254" y="578" width="28" height="14" rx="7" fill="#fff" stroke={MGRAY} /><rect x="1254" y="605" width="28" height="14" rx="7" fill={LABEL} />
      <rect x="168" y="687" width="75" height="24" fill="#fff" />
      <g fontSize="12"><text x="185" y="711" fontWeight="700">Report</text><text x="263" y="711">Report tooltip</text></g>
      <rect x="360" y="690" width="39" height="21" fill="#117865" /><path d="M373 706h12M379 700v11" stroke="#fff" strokeWidth="3" />
    </svg>
  );
}

function Toast() {
  return (
    <div className="absolute left-[1411px] top-[622px] w-[470px]">
      <Thumbnail />
      <div className="h-[143px] rounded-bl-[10px] border-l border-b border-[#bdbbb9] bg-[#eeeeee] pl-[19px]">
        <div className="flex items-center pt-[14px] h-[46px] w-[408px]">
          <svg width="20" height="20" viewBox="0 0 20 20" fill="none">
            <path d="M1.500 11V1.500H12v3" stroke="#d83b01" strokeWidth="2.600" strokeDasharray="2.600 1" />
            <path d="M4 10l8 3V4h2v9l-4 2z" fill="#9aa3ab" />
            <circle cx="17.500" cy="10.500" r="2" stroke="#1a9be6" strokeWidth="1.400" /><circle cx="10.500" cy="17.500" r="2" stroke="#1a9be6" strokeWidth="1.400" />
            <path d="M13 12l3-1M11 13l-.5 3" stroke="#1a9be6" />
          </svg>
          <span className="ml-[10px] text-[16.500px] text-[#1b1b1b] tracking-[-0.15px]">Snipping Tool</span>
          <svg width="14" height="4" viewBox="0 0 14 4" className="ml-auto" fill="#484644"><circle cx="1.500" cy="2" r="1" /><circle cx="7" cy="2" r="1" /><circle cx="12.500" cy="2" r="1" /></svg>
          <svg width="12" height="12" viewBox="0 0 12 12" className="ml-[37px]" stroke="#484644"><path d="M.5.500l11 11M11.500.500l-11 11" /></svg>
        </div>
        <div className="mt-[20px] text-[17.500px] leading-[26px] text-[#1b1b1b] whitespace-nowrap tracking-[0.25px]">
          Screenshot copied to clipboard and saved
        </div>
        <div className="text-[17.500px] leading-[26px] text-[#6b6b6b] whitespace-nowrap tracking-[0.2px]">Select here to mark up and share the image</div>
      </div>
    </div>
  );
}

/* ---------- page ---------- */

export default function App() {
  return (
    <div className="relative w-[1841px] h-[1005px] overflow-hidden bg-[#f3f2f1] font-['Open_Sans',sans-serif] text-[#252423]">
      <header className="h-[33px] bg-[#3b3a38] text-white text-[16px] flex">
        <svg width="92" height="33" viewBox="0 0 92 33" fill="none" stroke="#fff" strokeWidth="1.400">
          <path d="M-6 0h15.500v20.500H-6M0 20v-6h5v6M0 0v8h6V0" />
          <path d="M33 0v9h8M33 9c4-12 17-12 16-2-1 5-7 9-10 13" />
          <g stroke="#85837f"><path d="M91 0v9h-8M91 9c-4-12-18-12-17-2 1 5 7 9 10 13" /></g>
        </svg>
        <div className="ml-[623px] leading-[20px] w-[829px] tracking-[-0.1px]">Banklist - Power BI Desktop</div>
        <div className="leading-[22px] w-[111px] whitespace-nowrap tracking-[-0.3px]">Eszter Kovacs</div>
        <svg width="170" height="33" viewBox="1655 0 170 33" fill="none" stroke="#fff" strokeWidth="1.400">
          <circle cx="1669" cy="9" r="14" fill="#f3f2f1" stroke="none" />
          <circle cx="1669" cy="3" r="4.500" stroke="#111" strokeWidth="1.800" />
          <path d="M1661 13c0-2 1-2.500 2.500-2.500h11c1.500 0 2.500.5 2.500 2.500 0 8-16 8-16 0z" stroke="#111" strokeWidth="1.800" />
          <path d="M1727 12h15M1788.500 7.500h10v9.500h-10zM1791.500 7V4.500h11v10h-3" />
        </svg>
      </header>

      <nav className="h-[49px] flex text-[18px] pt-[9px]">
        <div className="w-[78px] leading-[28px]"><span className="ml-[-3px]">File</span></div>
        <div className="w-[97px]">
          <div className="w-[53px] font-bold leading-[26px] border-b-4 border-[#117865] h-[34px] tracking-[-0.5px]">Home</div>
        </div>
        <div className="w-[92px] leading-[26px] tracking-[-0.2px]">Insert</div>
        <div className="w-[126px] leading-[26px] tracking-[0.2px]">Modeling</div>
        <div className="w-[84px] leading-[26px]">View</div>
        <div className="leading-[26px]">Help</div>
      </nav>

      <Ribbon />

      <div className="flex h-[767px]">
        <aside className="w-[23px] border-r border-[#d8d6d4] shrink-0">
          <svg width="22" height="160" viewBox="0 208 22 160" fill="none" stroke="#797775" strokeWidth="1.500">
            <path d="M-5 227H3v15h-8M-5 244H4M1 228v14" stroke="#252423" />
            <path d="M-5 279H6v20h-11M-5 283H6M-5 289H6M-5 294H6M0 279v20" />
            <path d="M-5 334H7v9h-12M-5 338H7M-5 348H7v10h-12M-5 352H7M0 334v24" />
          </svg>
        </aside>

        <main className="w-[1364px] shrink-0 flex flex-col">
          <div className="flex h-[718px]">
            <section className="w-[1317px] relative bg-white h-[718px]">
              <svg width="1317" height="718" viewBox="23 208 1317 718" fill="none" stroke="#4f4d4b" strokeWidth="2" strokeDasharray="2 2" className="absolute inset-0">
                <path d="M52 211v705M52 916h1260M1311 211v705" />
              </svg>
              <div className="absolute left-[60px] top-[14px] w-[574px] h-[611px] rounded-[17px] bg-[#eaa0a0] border border-[#3f3333] border-l-[#c9b0b0] overflow-hidden">
                <StateVisual />
              </div>
              <div className="absolute left-[720px] top-[73px] w-[541px] h-[366px] rounded-[19px] bg-[#eaa0a0] border border-[#3f3333] overflow-hidden">
                <MonthVisual />
              </div>
              <svg width="90" height="22" viewBox="552 839 90 22" fill="none" stroke="#797775" strokeWidth="1.300" className="absolute left-[529px] top-[631px]">
                <path d="M552.500 841h20l-8 9v10h-4v-10z" />
                <path d="M599 843h-7.500v16.500h18.500v-6M591.500 852h7v7M602 843h8v7M602 851l8-8" />
                <g fill="#605e5c" stroke="none"><circle cx="630" cy="850" r="1.600" /><circle cx="638" cy="850" r="1.600" /><circle cx="646" cy="850" r="1.600" /></g>
              </svg>
              <span className="absolute left-[622px] top-[640px] w-[3px] h-[3px] rounded-full bg-[#605e5c]" />
              <HoverTooltip />
            </section>
            <aside className="w-[47px] bg-white border-l border-r border-l-[#a19f9d] border-r-[#d8d6d4] flex flex-col items-center pt-[17px]">
              <Chevrons flip />
              <svg width="18" height="18" viewBox="0 0 18 18" fill="none" stroke="#252423" strokeWidth="1.500" className="mt-[22px] ml-[4px]">
                <path d="M16.500 1v16l-8-6.500H1V7.500h7.500z" />
              </svg>
              <div className="[writing-mode:vertical-rl] text-[19px] leading-[24px] font-semibold mt-[10px] tracking-[0.4px]">Filters</div>
            </aside>
          </div>
          <div className="h-[49px] flex text-[16.500px]">
            <div className="w-[54px] flex items-center justify-center gap-[24px] pr-[2px]">
              <svg width="6" height="12" viewBox="0 0 6 12" fill="#c8c6c4"><path d="M6 0v12L0 6z" /></svg>
              <svg width="6" height="12" viewBox="0 0 6 12" fill="#c8c6c4"><path d="M0 0v12l6-6z" /></svg>
            </div>
            <div className="w-[109px] h-[49px] bg-white border-x border-x-[#a19f9d] border-b-[5px] border-b-[#117865] font-bold text-center leading-[49px] tracking-[-0.6px]">Report</div>
            <div className="w-[159px] border-r border-[#c8c6c4] text-center leading-[49px] tracking-[-0.3px]">Report tooltip</div>
            <div className="w-[54px] h-[45px] mt-[2px] bg-[#117865] flex items-center justify-center">
              <svg width="16" height="16" viewBox="0 0 16 16" stroke="#fff" strokeWidth="4"><path d="M8 0v16M0 8h16" /></svg>
            </div>
          </div>
        </main>

        <VizPane />
        <DataPane />
      </div>

      <footer className="h-[30px] border-t border-[#d8d6d4] flex items-center text-[16px] text-[#484644]">
        <div className="w-[55px] flex justify-end whitespace-nowrap pt-[3px] shrink-0 tracking-[0.1px]">Page 1 of 2</div>
        <svg width="172" height="20" viewBox="1580 982 172 20" className="ml-[1525px] mt-[3px] shrink-0" stroke="#605e5c" fill="none" strokeWidth="2">
          <path d="M1581 992h6M1593 992h139M1740 992h11M1745.500 986.500v11" />
          <path d="M1640.500 985v14" strokeWidth="5" /><path d="M1663 988v7" />
        </svg>
        <div className="ml-[24px] pt-[3px] tracking-[-0.5px]">71%</div>
        <svg width="16" height="16" viewBox="0 0 16 16" className="ml-[25px] mt-[2px] shrink-0" stroke="#484644" fill="none"><path d="M1 5V1h14v14H1V9M4 12V8h4v4z" /></svg>
      </footer>

      <div className="absolute left-0 top-[208px] w-full h-[5px] bg-linear-to-b from-black/15 to-transparent" />

      <Toast />
    </div>
  );
}
